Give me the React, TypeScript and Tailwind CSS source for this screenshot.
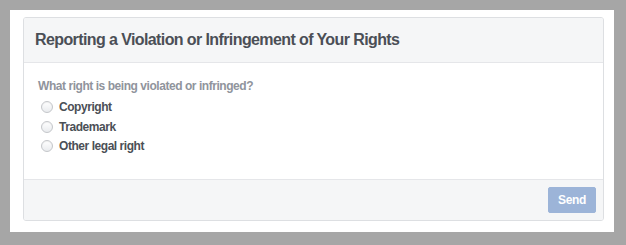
import React, { useState } from 'react';

const OPTIONS = ['Copyright', 'Trademark', 'Other legal right'];

export default function App() {
  const [choice, setChoice] = useState<string | null>(null);

  return (
    <div className="w-[626px] h-[245px] bg-[#a6a6a6] pl-[10px] pr-[12px] pt-[10px] pb-[13px] font-['Liberation_Sans',Arial,sans-serif]">
      <div className="h-full bg-white pl-[13px] pr-[10px] pt-[7px] pb-[11px]">
        <div className="h-full flex flex-col border border-[#dddfe2] rounded-[3px] overflow-hidden">
          <div className="h-[45px] shrink-0 flex items-center px-[11px] bg-[#f5f6f7] border-b border-[#e5e6e9]">
            <h2 className="text-[16px] font-bold text-[#4b4f56] leading-5 tracking-[-0.6px]">
              Reporting a Violation or Infringement of Your Rights
            </h2>
          </div>

          <div className="flex-1 px-[14px] pt-[15px]">
            <div className="text-[12px] font-bold text-[#90949c] leading-4 mb-[3.25px] tracking-[-0.45px]">
              What right is being violated or infringed?
            </div>
            <div className="flex flex-col">
              {OPTIONS.map((opt) => (
                <label key={opt} className="h-[19.5px] flex items-center gap-[6px] cursor-pointer">
                  <input
                    type="radio"
                    name="right"
                    checked={choice === opt}
                    onChange={() => setChoice(opt)}
                    className="sr-only"
                  />
                  <span className="ml-[3px] w-[12px] h-[12px] rounded-full border border-[#c4c6ca] bg-gradient-to-b from-[#ffffff] to-[#e9ebee] shadow-[inset_0_1px_1px_rgba(0,0,0,0.06)]" />
                  <span className="text-[12px] font-bold text-[#4b4f56] leading-4 tracking-[-0.45px]">{opt}</span>
                </label>
              ))}
            </div>
          </div>

          <div className="h-[41px] shrink-0 flex items-center justify-end pr-[7px] bg-[#f5f6f7] border-t border-[#e5e6e9]">
            <button
              disabled
              className="w-[48px] h-[26px] rounded-[2px] bg-[#9cb4d8] border border-[#9cb4d8] text-white text-[12px] font-bold tracking-[-0.3px]"
            >
              Send
            </button>
          </div>
        </div>
      </div>
    </div>
  );
}
